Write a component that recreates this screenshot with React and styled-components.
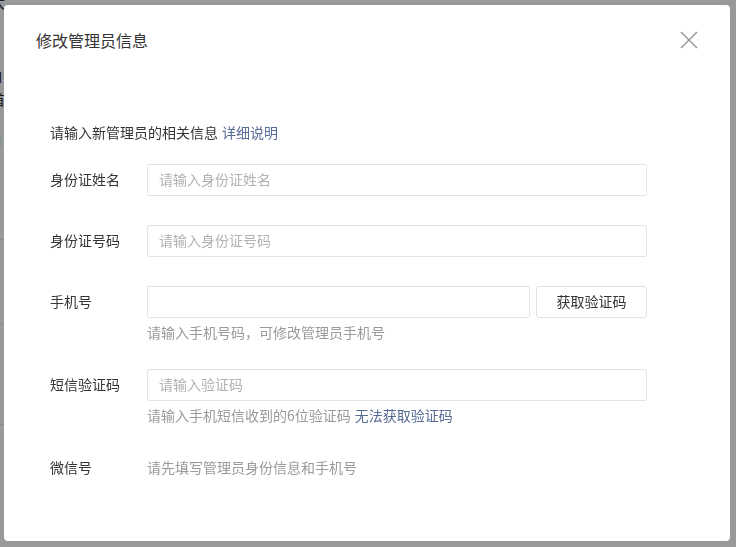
import React from "react";
import styled, { createGlobalStyle } from "styled-components";

const Global = createGlobalStyle`
  html, body { margin: 0; padding: 0; background: #fff; }
  body { font-family: "Noto Sans CJK SC", "Noto Sans", sans-serif; color: #353535; }
  * { box-sizing: border-box; }
`;

const Page = styled.div`
  width: 736px;
  height: 547px;
  overflow: hidden;
  display: flex;
  flex-direction: column;
  margin-left: -9px;
`;

const PageRow = styled.div`
  height: ${(p) => p.$h}px;
  flex-shrink: 0;
  display: flex;
  align-items: center;
  font-size: 14px;
  line-height: 14px;
  color: #333;
  border-bottom: ${(p) => (p.$line ? "1px solid #e6e6e6" : "none")};
`;

const Overlay = styled.div`
  position: fixed;
  inset: 0;
  background: rgba(0, 0, 0, 0.4);
  display: flex;
  padding: 5px 6px 6px 4px;
`;

const Modal = styled.div`
  flex: 1;
  background: #fff;
  border-radius: 4px;
  display: flex;
  flex-direction: column;
`;

const Header = styled.div`
  display: flex;
  align-items: center;
  justify-content: space-between;
  padding: 23px 32px 0 32px;
  height: 47px;
`;

const Title = styled.h3`
  margin: 0;
  font-size: 16px;
  font-weight: 400;
  line-height: 24px;
  color: #353535;
`;

const Close = styled.button`
  border: none;
  background: none;
  padding: 0;
  width: 18px;
  height: 18px;
  display: flex;
  cursor: pointer;
`;

const Body = styled.div`
  padding: 70px 0 0 46px;
  display: flex;
  flex-direction: column;
`;

const Intro = styled.p`
  margin: 0 0 22px;
  font-size: 14px;
  line-height: 20px;
  color: #353535;
`;

const Link = styled.a`
  color: #576b95;
  text-decoration: none;
  margin-left: 4px;
`;

const Row = styled.div`
  display: flex;
  align-items: flex-start;
  margin-bottom: ${(p) => p.$mb}px;
`;

const Label = styled.label`
  width: 97px;
  flex-shrink: 0;
  font-size: 14px;
  line-height: 30px;
  color: #353535;
`;

const Field = styled.div`
  display: flex;
  flex-direction: column;
`;

const Controls = styled.div`
  display: flex;
  gap: 6px;
`;

const Input = styled.input`
  width: ${(p) => p.$w}px;
  height: 32px;
  border: 1px solid #e4e4e4;
  border-radius: 2px;
  padding: 0 11px 2px;
  font-family: inherit;
  font-size: 14px;
  color: #353535;
  outline: none;
  &::placeholder { color: #b2b2b2; }
`;

const Button = styled.button`
  width: 111px;
  height: 32px;
  border: 1px solid #e0e0e0;
  border-radius: 3px;
  background: #fff;
  font-family: inherit;
  font-size: 14px;
  color: #353535;
  padding: 0 0 2px;
`;

const Hint = styled.div`
  margin-top: 4px;
  font-size: 14px;
  line-height: 20px;
  color: #9a9a9a;
`;

const Plain = styled.div`
  font-size: 14px;
  line-height: 30px;
  color: #9a9a9a;
`;

const bgRows = [
  { h: 4, t: "大" },
  { h: 60, t: "4" },
  { h: 26, t: "M" },
  { h: 18, t: "首" },
  { h: 68, t: "H" },
  { h: 64, t: "", line: true },
  { h: 70, t: "E" },
  { h: 15, t: "", line: true },
  { h: 80, t: "K" },
  { h: 20, t: "", line: true },
  { h: 60, t: "" },
];

export default function App() {
  return (
    <>
      <Global />
      <Page>
        {bgRows.map((r, i) => (
          <PageRow key={i} $h={r.h} $line={r.line}>
            {r.t}
          </PageRow>
        ))}
      </Page>
      <Overlay>
        <Modal>
          <Header>
            <Title>修改管理员信息</Title>
            <Close aria-label="关闭">
              <svg width="18" height="18" viewBox="0 0 18 18">
                <path d="M1 1L17 17M17 1L1 17" stroke="#9a9a9a" strokeWidth="1.5" fill="none" />
              </svg>
            </Close>
          </Header>
          <Body>
            <Intro>
              请输入新管理员的相关信息<Link href="#">详细说明</Link>
            </Intro>
            <Row $mb={29}>
              <Label>身份证姓名</Label>
              <Input $w={500} placeholder="请输入身份证姓名" />
            </Row>
            <Row $mb={29}>
              <Label>身份证号码</Label>
              <Input $w={500} placeholder="请输入身份证号码" />
            </Row>
            <Row $mb={27}>
              <Label>手机号</Label>
              <Field>
                <Controls>
                  <Input $w={383} />
                  <Button>获取验证码</Button>
                </Controls>
                <Hint>请输入手机号码，可修改管理员手机号</Hint>
              </Field>
            </Row>
            <Row $mb={27}>
              <Label>短信验证码</Label>
              <Field>
                <Input $w={500} placeholder="请输入验证码" />
                <Hint>
                  请输入手机短信收到的6位验证码<Link href="#">无法获取验证码</Link>
                </Hint>
              </Field>
            </Row>
            <Row $mb={0}>
              <Label>微信号</Label>
              <Plain>请先填写管理员身份信息和手机号</Plain>
            </Row>
          </Body>
        </Modal>
      </Overlay>
    </>
  );
}
